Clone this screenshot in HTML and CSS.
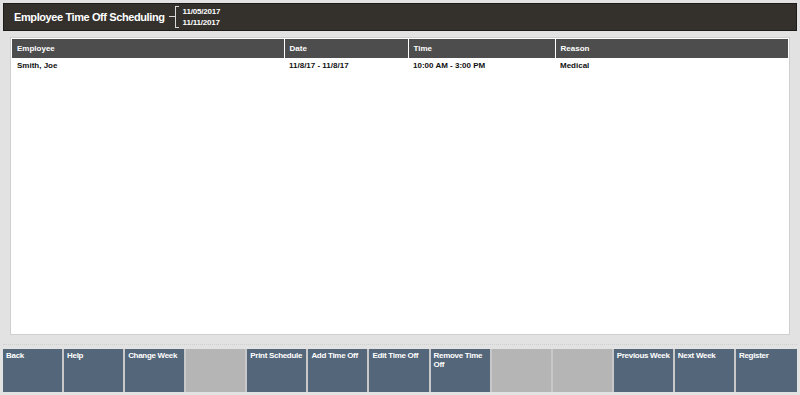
FILE: index.html
```html
<!DOCTYPE html>
<html lang="en">
<head>
    <meta charset="UTF-8">
    <title>Employee Time Off Scheduling</title>
    <link rel="stylesheet" href="styles.css">
</head>
<body>
    <div class="header">
        <div class="header-title">Employee Time Off Scheduling</div>
        <div class="range">
            <div class="range-dash"></div>
            <div class="range-bracket"></div>
            <div class="range-dates">
                <div>11/05/2017</div>
                <div>11/11/2017</div>
            </div>
        </div>
    </div>

    <div class="content">
        <div class="panel">
            <table class="grid">
                <thead>
                    <tr>
                        <th class="col-emp">Employee</th>
                        <th class="col-date">Date</th>
                        <th class="col-time">Time</th>
                        <th>Reason</th>
                    </tr>
                </thead>
                <tbody>
                    <tr>
                        <td>Smith, Joe</td>
                        <td>11/8/17 - 11/8/17</td>
                        <td>10:00 AM - 3:00 PM</td>
                        <td>Medical</td>
                    </tr>
                </tbody>
            </table>
        </div>
    </div>

    <div class="buttons">
        <div class="btn">Back</div>
        <div class="btn">Help</div>
        <div class="btn">Change Week</div>
        <div class="btn empty"></div>
        <div class="btn">Print Schedule</div>
        <div class="btn">Add Time Off</div>
        <div class="btn">Edit Time Off</div>
        <div class="btn">Remove Time Off</div>
        <div class="btn empty"></div>
        <div class="btn empty"></div>
        <div class="btn">Previous Week</div>
        <div class="btn">Next Week</div>
        <div class="btn">Register</div>
    </div>
</body>
</html>
```

FILE: styles.css
```css
* {
    margin: 0;
    padding: 0;
    box-sizing: border-box;
    font-family: "Liberation Sans", Arial, sans-serif;
}

body {
    width: 800px;
    height: 395px;
    background-color: #e2e2e2;
    padding: 3px;
    display: flex;
    flex-direction: column;
    overflow: hidden;
}

.header {
    height: 28px;
    background-color: #34312d;
    border: 1px solid #1e1c1a;
    display: flex;
    align-items: center;
    padding-left: 10px;
    color: white;
}

.header-title {
    font-size: 11px;
    font-weight: bold;
    letter-spacing: -0.4px;
}

.range {
    display: flex;
    align-items: center;
    margin-left: 4px;
}

.range-dash {
    width: 6px;
    height: 1px;
    background-color: #d8d8d8;
}

.range-bracket {
    width: 4px;
    height: 22px;
    border: 1px solid #d8d8d8;
    border-right: none;
}

.range-dates {
    font-size: 8px;
    font-weight: bold;
    line-height: 11px;
    margin-left: 4px;
    letter-spacing: -0.2px;
}

.content {
    margin-top: 3px;
    padding: 3px 7px 0 7px;
    height: 305px;
}

.panel {
    height: 298px;
    background-color: white;
    border: 1px solid #cfcfcf;
    padding: 1px;
}

.grid {
    width: 100%;
    border-collapse: collapse;
    font-size: 8px;
    font-weight: bold;
}

.grid th {
    background-color: #4d4d4d;
    color: white;
    text-align: left;
    height: 19px;
    padding: 0 5px;
    border-left: 1px solid white;
}

.grid th:first-child {
    border-left: none;
}

.col-emp {
    width: 272px;
}

.col-date {
    width: 124px;
}

.col-time {
    width: 147px;
}

.grid td {
    color: #111;
    padding: 2px 5px;
    height: 15px;
}

.buttons {
    margin-top: 6px;
    border-top: 1px dotted #cfcfcf;
    padding-top: 4px;
    display: grid;
    grid-template-columns: repeat(13, 1fr);
}

.btn {
    height: 43px;
    background-color: #546679;
    border-right: 2px solid #c8c8c8;
    color: white;
    font-size: 8px;
    font-weight: bold;
    letter-spacing: -0.3px;
    padding: 2px 3px;
    line-height: 9px;
}

.btn:last-child {
    border-right: none;
}

.btn.empty {
    background-color: #b5b5b5;
}
```
